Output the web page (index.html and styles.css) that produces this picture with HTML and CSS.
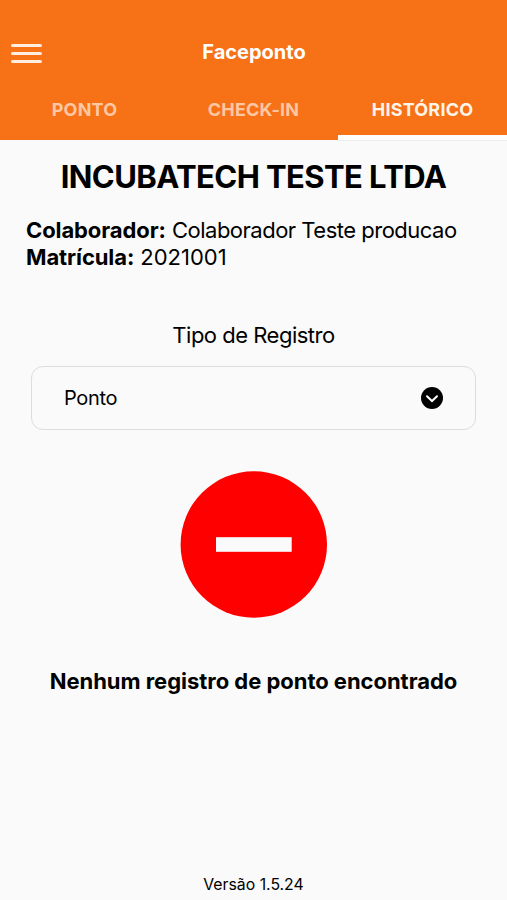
FILE: index.html
```html
<!DOCTYPE html>
<html lang="pt-BR">
<head>
  <meta charset="UTF-8">
  <title>Faceponto</title>
  <link rel="stylesheet" href="styles.css">
</head>
<body>
  <header class="topo">
    <div class="barra">
      <button class="menu" aria-label="Menu"><span></span><span></span><span></span></button>
      <h1>Faceponto</h1>
    </div>
    <nav class="abas">
      <a class="aba">PONTO</a>
      <a class="aba">CHECK-IN</a>
      <a class="aba ativa">HISTÓRICO</a>
    </nav>
  </header>

  <main>
    <h2>INCUBATECH TESTE LTDA</h2>
    <div class="dados">
      <p><b>Colaborador:</b> <span class="nome">Colaborador Teste producao</span></p>
      <p><b>Matrícula:</b> <span>2021001</span></p>
    </div>

    <p class="rotulo">Tipo de Registro</p>
    <div class="seletor">
      <span>Ponto</span>
      <svg width="22" height="22" viewBox="0 0 22 22">
        <circle cx="11" cy="11" r="11" fill="#000"/>
        <path d="M6 9.2l5 4.8 5-4.8" fill="none" stroke="#fff" stroke-width="2" stroke-linecap="round"/>
      </svg>
    </div>

    <svg class="vazio" width="148" height="148" viewBox="0 0 148 148">
      <circle cx="73.8" cy="73.5" r="73.2" fill="#f00"/>
      <rect x="36" y="66.2" width="75.7" height="14.6" fill="#fafafa"/>
    </svg>
    <p class="mensagem">Nenhum registro de ponto encontrado</p>
  </main>

  <footer>Versão 1.5.24</footer>
</body>
</html>
```
FILE: styles.css
```css
* { box-sizing: border-box; margin: 0; padding: 0; }
body {
  display: flex;
  flex-direction: column;
  height: 900px;
  background: #fafafa;
  color: #000;
  font-family: Inter, sans-serif;
  white-space: nowrap;
  overflow: hidden;
}

.topo { height: 140px; padding-top: 26px; background: #f77117; color: #fff; }
.barra { display: grid; grid-template-columns: 42px 1fr 42px; align-items: center; height: 53px; }
.barra h1 { padding: 0 0 2px 1px; font-size: 20px; font-weight: 700; text-align: center; }
.menu { display: flex; flex-direction: column; gap: 5px; padding: 1px 0 0 11px; border: 0; background: none; }
.menu span { width: 31px; height: 3px; border-radius: 1.5px; background: #ffeee0; }

.abas { display: grid; grid-template-columns: repeat(3, 1fr); height: 61px; }
.aba { padding-top: 19px; line-height: 24px; text-align: center; font-size: 18px; font-weight: 700; letter-spacing: 0.2px; color: #fcc7a2; border-bottom: 5px solid transparent; }
.ativa { color: #fff4e8; border-bottom-color: #fff; box-shadow: 0 1px 0 #ececec; }

main { display: flex; flex-direction: column; flex: 1; }
h2 { margin-top: 17px; line-height: 40px; font-size: 31px; font-weight: 700; letter-spacing: -0.6px; text-align: center; }
.dados { margin-top: 20px; padding-left: 26px; font-size: 22px; line-height: 27px; }
b { font-weight: 700; letter-spacing: -0.1px; }
.nome { letter-spacing: -0.5px; }

.rotulo { margin-top: 50px; line-height: 28px; font-size: 22px; letter-spacing: -0.5px; text-align: center; }
.seletor {
  display: flex;
  align-items: center;
  justify-content: space-between;
  height: 64px;
  margin: 17px 31px 0;
  padding: 0 32px;
  border: 1px solid #ddd;
  border-radius: 12px;
  font-size: 20px;
  letter-spacing: -0.3px;
}

.vazio { align-self: center; margin-top: 41px; }
.mensagem { margin-top: 47px; line-height: 30px; font-size: 22px; font-weight: 700; letter-spacing: -0.03px; text-align: center; }

footer { padding-bottom: 5px; line-height: 20px; font-size: 15.8px; text-align: center; }
```
